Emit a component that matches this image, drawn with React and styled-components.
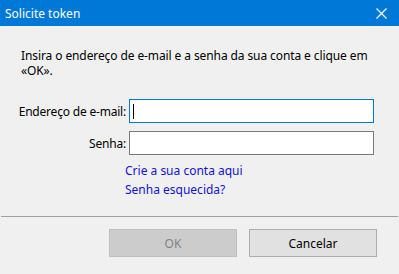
import styled, { createGlobalStyle } from "styled-components"

const Global = createGlobalStyle`
    html, body {
        margin: 0;
        padding: 0;
        background: #f0f0f0;
    }
    body {
        font-family: 'Noto Sans', 'Open Sans', sans-serif;
        font-size: 12px;
        color: #000;
    }
`

export default function App() {
    return (
        <Window>
            <Global />
            <TitleBar>
                <span>Solicite token</span>
                <Close>
                    <svg width="11" height="11" viewBox="0 0 11 11">
                        <path d="M0.5 0.5 L10.5 10.5 M10.5 0.5 L0.5 10.5" stroke="#fff" strokeWidth="1.2" />
                    </svg>
                </Close>
            </TitleBar>
            <Body>
                <Intro>Insira o endereço de e-mail e a senha da sua conta e clique em «OK».</Intro>
                <Form>
                    <Label>Endereço de e-mail:</Label>
                    <Input focused><Caret /></Input>
                    <Label>Senha:</Label>
                    <Input />
                    <span />
                    <Links>
                        <Link>Crie a sua conta aqui</Link>
                        <Link>Senha esquecida?</Link>
                    </Links>
                </Form>
            </Body>
            <Footer>
                <Button disabled>OK</Button>
                <Button>Cancelar</Button>
            </Footer>
        </Window>
    )
}

const Window = styled.div`
    width: 399px;
    height: 274px;
    display: flex;
    flex-direction: column;
    background: #f0f0f0;
    overflow: hidden;
`

const TitleBar = styled.div`
    height: 26px;
    background: #0078d7;
    color: #fff;
    display: flex;
    align-items: center;
    justify-content: space-between;
    padding: 0 12px 0 5px;
    font-size: 12px;
`

const Close = styled.div`
    display: flex;
    align-items: center;
`

const Body = styled.div`
    padding: 22px 24px 0 21px;
    flex: 1;
`

const Intro = styled.p`
    margin: 0;
    line-height: 15px;
    letter-spacing: -0.1px;
`

const Form = styled.div`
    margin-top: 21px;
    display: grid;
    grid-template-columns: 105px 245px;
    column-gap: 3px;
    row-gap: 8px;
    align-items: center;
`

const Label = styled.div`
    display: flex;
    justify-content: flex-end;
    white-space: nowrap;
    letter-spacing: -0.2px;
`

const Input = styled.div`
    height: 24px;
    box-sizing: border-box;
    background: #fff;
    border: 1px solid ${({ focused }) => focused ? '#0078d7' : '#7a7a7a'};
    display: flex;
    align-items: center;
    padding-left: 3px;
`

const Caret = styled.div`
    width: 1px;
    height: 15px;
    background: #000;
`

const Links = styled.div`
    display: flex;
    flex-direction: column;
    gap: 4px;
    margin-left: -4px;
`

const Link = styled.span`
    color: #1212d6;
    line-height: 15px;
`

const Footer = styled.div`
    border-top: 1px solid #a0a0a0;
    margin: 0 1px;
    height: 58px;
    box-sizing: border-box;
    display: flex;
    justify-content: flex-end;
    gap: 12px;
    padding: 12px 21px 0 0;
`

const Button = styled.button`
    width: 128px;
    height: 28px;
    box-sizing: border-box;
    font-family: inherit;
    font-size: 12px;
    background: ${({ disabled }) => disabled ? '#cccccc' : '#e1e1e1'};
    border: 1px solid ${({ disabled }) => disabled ? '#bfbfbf' : '#adadad'};
    color: ${({ disabled }) => disabled ? '#838383' : '#000'};
    padding: 0;
`
